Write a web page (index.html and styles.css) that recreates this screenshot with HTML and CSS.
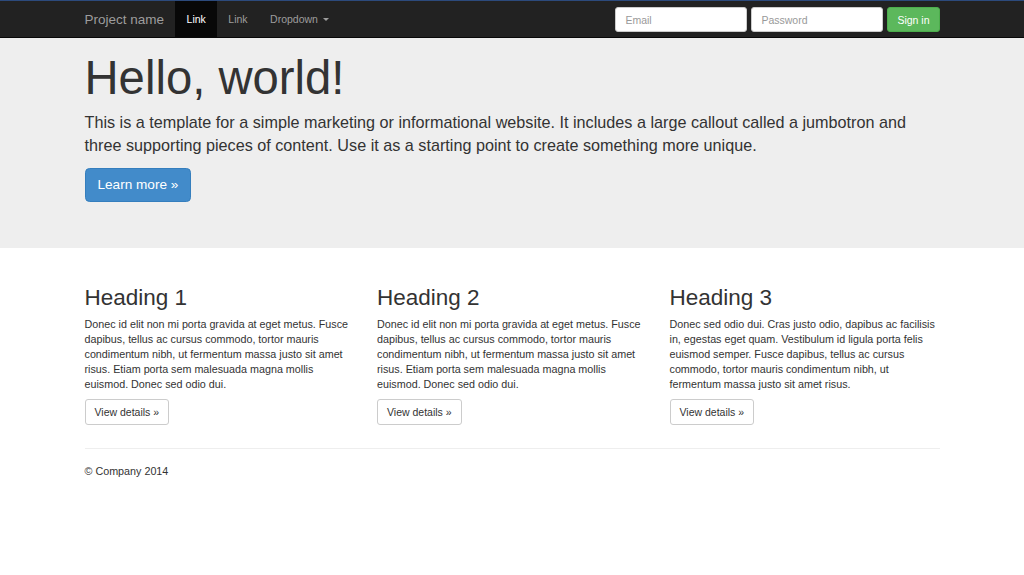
FILE: index.html
```html
<!DOCTYPE html>
<html lang="en">
<head>
<meta charset="utf-8">
<title>Jumbotron Template</title>
<link rel="stylesheet" href="styles.css">
</head>
<body>
<nav class="navbar">
  <div class="container navbar-inner">
    <div class="nav-left">
      <a class="brand" href="#">Project name</a>
      <ul class="nav">
        <li><a class="nav-link active" href="#">Link</a></li>
        <li><a class="nav-link" href="#">Link</a></li>
        <li><a class="nav-link" href="#">Dropdown <span class="caret"></span></a></li>
      </ul>
    </div>
    <form class="nav-form">
      <input class="form-control" type="text" placeholder="Email">
      <input class="form-control" type="password" placeholder="Password">
      <button class="btn btn-success" type="button">Sign in</button>
    </form>
  </div>
</nav>

<div class="jumbotron">
  <div class="container">
    <h1>Hello, world!</h1>
    <p class="lead">This is a template for a simple marketing or informational website. It includes a large callout called a jumbotron and three supporting pieces of content. Use it as a starting point to create something more unique.</p>
    <p class="lead-action"><a class="btn btn-primary btn-lg" href="#">Learn more &raquo;</a></p>
  </div>
</div>

<div class="container">
  <div class="row">
    <div class="col">
      <h2>Heading 1</h2>
      <p>Donec id elit non mi porta gravida at eget metus. Fusce dapibus, tellus ac cursus commodo, tortor mauris condimentum nibh, ut fermentum massa justo sit amet risus. Etiam porta sem malesuada magna mollis euismod. Donec sed odio dui.</p>
      <p><a class="btn btn-default" href="#">View details &raquo;</a></p>
    </div>
    <div class="col">
      <h2>Heading 2</h2>
      <p>Donec id elit non mi porta gravida at eget metus. Fusce dapibus, tellus ac cursus commodo, tortor mauris condimentum nibh, ut fermentum massa justo sit amet risus. Etiam porta sem malesuada magna mollis euismod. Donec sed odio dui.</p>
      <p><a class="btn btn-default" href="#">View details &raquo;</a></p>
    </div>
    <div class="col">
      <h2>Heading 3</h2>
      <p>Donec sed odio dui. Cras justo odio, dapibus ac facilisis in, egestas eget quam. Vestibulum id ligula porta felis euismod semper. Fusce dapibus, tellus ac cursus commodo, tortor mauris condimentum nibh, ut fermentum massa justo sit amet risus.</p>
      <p><a class="btn btn-default" href="#">View details &raquo;</a></p>
    </div>
  </div>
  <hr class="divider">
  <footer class="footer">
    <p>&copy; Company 2014</p>
  </footer>
</div>
</body>
</html>
```

FILE: styles.css
```css
* { box-sizing: border-box; }

html, body {
  margin: 0;
  padding: 0;
}

body {
  font-family: "Liberation Sans", Arial, Helvetica, sans-serif;
  font-size: 10.75px;
  line-height: 15px;
  color: #333;
  background: #fff;
}

a { text-decoration: none; }

.container {
  width: 877.5px;
  margin: 0 auto;
  padding: 0 11.25px;
}

/* Navbar */
.navbar {
  background: #222;
  border-top: 1px solid #2c4a7c;
  border-bottom: 1px solid #080808;
  height: 38px;
}

.navbar-inner {
  display: flex;
  justify-content: space-between;
  align-items: flex-start;
  height: 100%;
}

.nav-left {
  display: flex;
  margin-left: -11.25px;
}

.brand {
  display: block;
  font-size: 13.5px;
  line-height: 15px;
  padding: 10.5px 11.25px;
  height: 36px;
  color: #9d9d9d;
}

.nav {
  display: flex;
  list-style: none;
  margin: 0;
  padding: 0;
}

.nav-link {
  display: block;
  padding: 10.5px 11.25px;
  height: 36px;
  line-height: 15px;
  font-size: 10.5px;
  color: #9d9d9d;
}

.nav-link.active {
  color: #fff;
  background: #080808;
}

.caret {
  display: inline-block;
  width: 0;
  height: 0;
  margin-left: 2px;
  vertical-align: middle;
  border-top: 3px solid #9d9d9d;
  border-left: 3px solid transparent;
  border-right: 3px solid transparent;
}

.nav-form {
  display: flex;
  gap: 4px;
  margin: 0;
  padding-top: 6px;
}

.form-control {
  width: 132px;
  height: 25px;
  padding: 4.5px 9px;
  font-family: inherit;
  font-size: 10.5px;
  color: #555;
  background: #fff;
  border: 1px solid #ccc;
  border-radius: 3px;
  outline: none;
}

.form-control::placeholder { color: #999; }

/* Buttons */
.btn {
  display: inline-block;
  font-family: inherit;
  font-size: 10.5px;
  line-height: 15px;
  padding: 4.5px 9px;
  border: 1px solid transparent;
  border-radius: 3px;
  cursor: pointer;
  text-align: center;
}

.btn-success {
  color: #fff;
  background: #5cb85c;
  border-color: #4cae4c;
  height: 25px;
}

.btn-primary {
  color: #fff;
  background: #428bca;
  border-color: #357ebd;
}

.btn-lg {
  font-size: 13.6px;
  line-height: 17px;
  padding: 7.5px 12px;
  border-radius: 4.5px;
}

.btn-default {
  color: #333;
  background: #fff;
  border-color: #ccc;
}

/* Jumbotron */
.jumbotron {
  background: #eee;
  padding: 14px 0 35.5px;
  margin-bottom: 22.5px;
}

.jumbotron h1 {
  font-size: 47.25px;
  line-height: 1.1;
  font-weight: 500;
  margin: 0 0 7.5px;
  color: #333;
}

.jumbotron .lead {
  font-size: 16.2px;
  line-height: 22.5px;
  margin: 0 0 11.25px;
}

.jumbotron .lead-action {
  margin: 0 0 11.25px;
}

/* Columns */
.row {
  display: grid;
  grid-template-columns: repeat(3, 1fr);
  margin: 0 -11.25px;
}

.col {
  padding: 0 11.25px;
}

.col h2 {
  font-size: 22.5px;
  line-height: 1.1;
  font-weight: 500;
  margin: 15.5px 0 5.5px;
}

.col p {
  margin: 0 0 7.5px;
}

.divider {
  border: 0;
  border-top: 1px solid #eee;
  margin: 15px 0;
}

.footer p {
  margin: 0 0 7.5px;
}
```
